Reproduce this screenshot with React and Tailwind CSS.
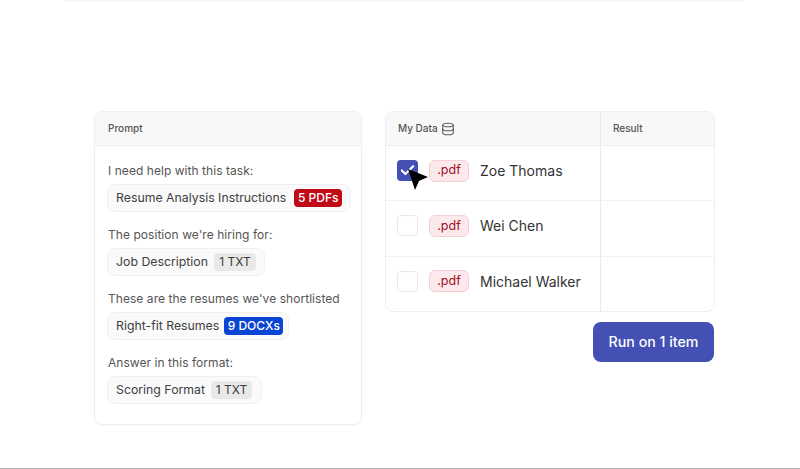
import React from 'react';
import { Database, Check } from 'lucide-react';

const promptSections = [
  { label: 'I need help with this task:', name: 'Resume Analysis Instructions', badge: '5 PDFs', chipClass: 'gap-[8px] pr-[8px]', badgeClass: 'w-[48px] font-medium bg-[#c00a16] text-white' },
  { label: "The position we're hiring for:", name: 'Job Description', badge: '1 TXT', chipClass: 'gap-[6px] pr-[8px]', badgeClass: 'w-[42px] bg-[#e9e9e9] text-[#3a3a3a]' },
  { label: "These are the resumes we've shortlisted", name: 'Right-fit Resumes', badge: '9 DOCXs', chipClass: 'gap-[5px] pr-[5px]', badgeClass: 'w-[59px] font-medium bg-[#0b45d6] text-white' },
  { label: 'Answer in this format:', name: 'Scoring Format', badge: '1 TXT', chipClass: 'gap-[6px] pr-[9px]', badgeClass: 'w-[41px] bg-[#e9e9e9] text-[#3a3a3a]' },
];

const rows = [
  { name: 'Zoe Thomas', checked: true },
  { name: 'Wei Chen', checked: false },
  { name: 'Michael Walker', checked: false },
];

const App = () => {
  return (
    <div className="h-[469px] w-[800px] overflow-hidden bg-white flex flex-col font-['Inter',sans-serif]">
      <div className="h-[2px] mx-[64px] w-[680px] bg-[#f7f7f7]" />
      <div className="flex-1 flex items-start pt-[109px] pl-[94px] gap-[23px]">
        {/* prompt card */}
        <div className="w-[268px] h-[314px] border border-[#efefef] rounded-lg overflow-hidden shadow-[0_1px_2px_rgba(0,0,0,0.03)]">
          <div className="h-[34px] bg-[#f8f8f8] border-b border-[#efefef] flex items-center px-[13px] text-[10px] font-medium text-[#555555]">
            Prompt
          </div>
          <div className="pt-[16px] px-[13px] flex flex-col gap-[14px]">
            {promptSections.map((section, index) => (
              <div key={index} className="flex flex-col items-start gap-[4px]">
                <p className="text-[12px] tracking-[0.05px] leading-[18px] text-[#555555] whitespace-nowrap">{section.label}</p>
                <div className={`h-[28px] -ml-px flex items-center pl-[8px] bg-[#fafafa] border border-[#f0f0f0] rounded-lg ${section.chipClass}`}>
                  <span className="text-[12.3px] text-[#404040] whitespace-nowrap">{section.name}</span>
                  <span className={`h-[18px] flex items-center justify-center rounded text-[12px] whitespace-nowrap ${section.badgeClass}`}>
                    {section.badge}
                  </span>
                </div>
              </div>
            ))}
          </div>
        </div>

        <div className="flex flex-col items-end gap-[10px]">
          {/* data table */}
          <div className="w-[330px] h-[201px] border border-[#efefef] rounded-lg overflow-hidden flex flex-col">
            <div className="h-[34px] shrink-0 bg-[#f8f8f8] border-b border-[#efefef] flex text-[10px] font-medium text-[#555555]">
              <div className="w-[215px] flex items-center gap-[3px] pl-[12px] border-r border-[#e9e9e9]">
                My Data
                <Database size={14} strokeWidth={1.8} />
              </div>
              <div className="flex-1 flex items-center pl-[12px]">Result</div>
            </div>
            {rows.map((row, index) => (
              <div key={index} className="flex-1 flex border-b border-[#f2f2f2] last:border-b-0">
                <div className="w-[215px] pb-[5px] flex items-center pl-[11px] border-r border-[#e9e9e9]">
                  <div className="relative mr-[11px]">
                    {row.checked ? (
                      <div className="w-[21px] h-[21px] rounded bg-[#4450b4] flex items-center justify-center">
                        <Check size={17} strokeWidth={3} className="text-white" />
                      </div>
                    ) : (
                      <div className="w-[21px] h-[21px] rounded border border-[#e9e9e9] bg-white" />
                    )}
                    {row.checked && (
                      <svg className="absolute left-[10px] top-[9px]" width="22" height="22" viewBox="0 0 22 22">
                        <path d="M1 0 L21 8 L12 12 L8 21 Z" fill="#000000" />
                      </svg>
                    )}
                  </div>
                  <span className="h-[22px] w-[40px] flex items-center justify-center rounded-md bg-[#fbe9eb] border border-[#f6cfd3] text-[12.5px] text-[#a3121d]">
                    .pdf
                  </span>
                  <span className="ml-[11px] text-[14px] text-[#333333] whitespace-nowrap">{row.name}</span>
                </div>
                <div className="flex-1" />
              </div>
            ))}
          </div>
          <button className="w-[121px] h-[40px] mr-[1px] rounded-lg bg-[#4450b4] text-white text-[14.2px] font-medium">
            Run on 1 item
          </button>
        </div>
      </div>
      <div className="h-[1px] bg-[#b5b5b5]" />
    </div>
  );
};

export default App;
